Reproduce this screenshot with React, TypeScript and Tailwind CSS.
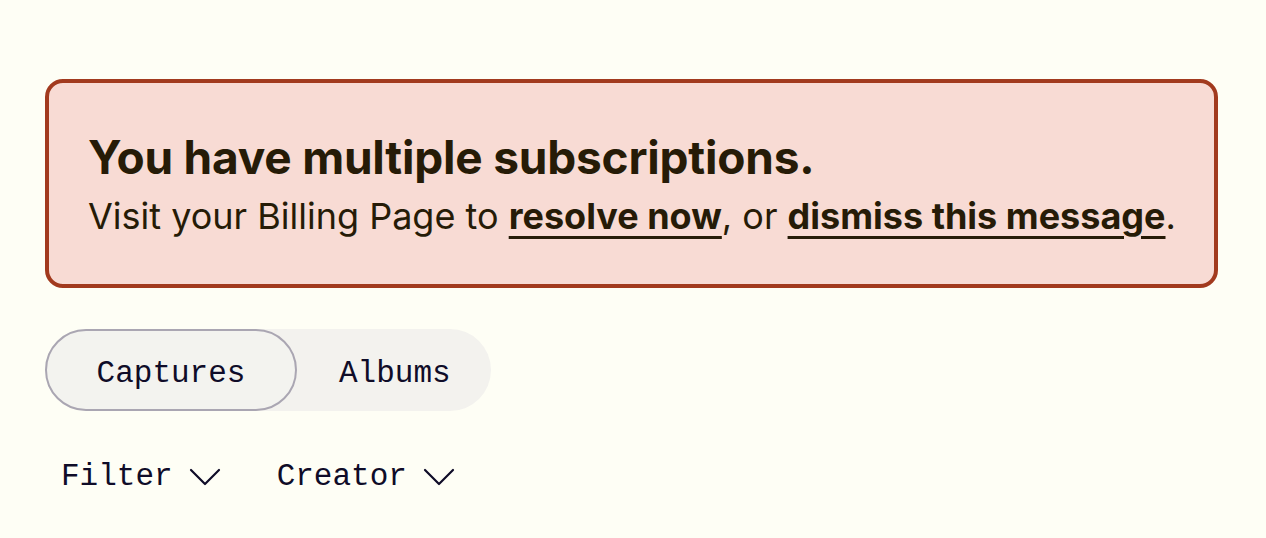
const mono = "font-['Liberation_Mono',monospace]";

function Banner() {
  return (
    <div className="rounded-[18px] border-4 border-[#a23a1e] bg-[#f8dbd4] pl-[39px] pr-[28px] pt-[46px] pb-[43px] font-['Inter',sans-serif] text-[#261b07]">
      <h2 className="text-[46px] font-bold leading-[56px] tracking-[-0.2px]">You have multiple subscriptions.</h2>
      <p className="mt-[6px] whitespace-nowrap text-[36px] leading-[50px]">
        Visit your Billing Page to{" "}
        <a className="font-bold underline decoration-[3px] underline-offset-[7px]">resolve now</a>, or{" "}
        <a className="font-bold underline decoration-[3px] underline-offset-[7px]">dismiss this message</a>.
      </p>
    </div>
  );
}

function Tabs() {
  return (
    <div className={`inline-flex items-center rounded-full bg-[#f3f2ee] text-[31px] text-[#0f0c28] ${mono}`}>
      <button className="h-[82px] w-[252px] rounded-full border-2 border-[#aaa6b2] bg-[#f3f3ef] pt-[8px]">Captures</button>
      <button className="h-[82px] pt-[8px] pl-[42px] pr-[40px]">Albums</button>
    </div>
  );
}

function Chevron() {
  return (
    <svg width="32" height="18" viewBox="0 0 32 18" fill="none" stroke="currentColor" strokeWidth="2.2" strokeLinecap="round" strokeLinejoin="round">
      <path d="M2 2 L16 16 L30 2" />
    </svg>
  );
}

function Dropdown({ label }: { label: string }) {
  return (
    <button className={`flex items-center gap-[16px] text-[31px] text-[#0f0c28] ${mono}`}>
      {label}
      <Chevron />
    </button>
  );
}

export default function App() {
  return (
    <div className="min-h-[538px] bg-[#fefef5] pl-[45px] pr-[48px] pt-[79px]">
      <Banner />
      <div className="mt-[41px]">
        <Tabs />
      </div>
      <div className="mt-[43px] flex gap-[56px] pl-[16px]">
        <Dropdown label="Filter" />
        <Dropdown label="Creator" />
      </div>
    </div>
  );
}
